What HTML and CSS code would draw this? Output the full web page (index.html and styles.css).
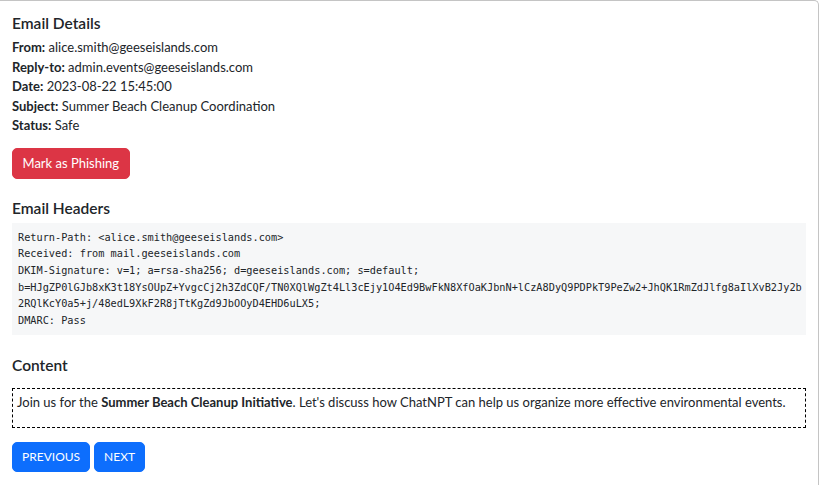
FILE: index.html
```html
<!DOCTYPE html>
<html lang="en">
<head>
<meta charset="utf-8">
<title>Email Details</title>
<link rel="stylesheet" href="styles.css">
</head>
<body>
<div class="card">
  <h5 class="section-title first">Email Details</h5>
  <div class="details">
    <div><strong>From:</strong> alice.smith@geeseislands.com</div>
    <div><strong>Reply-to:</strong> admin.events@geeseislands.com</div>
    <div><strong>Date:</strong> 2023-08-22 15:45:00</div>
    <div><strong>Subject:</strong> Summer Beach Cleanup Coordination</div>
    <div><strong>Status:</strong> Safe</div>
  </div>
  <button class="btn btn-danger">Mark as Phishing</button>

  <h5 class="section-title">Email Headers</h5>
  <pre class="headers">Return-Path: &lt;alice.smith@geeseislands.com&gt;
Received: from mail.geeseislands.com
DKIM-Signature: v=1; a=rsa-sha256; d=geeseislands.com; s=default;
b=HJgZP0lGJb8xK3t18YsOUpZ+YvgcCj2h3ZdCQF/TN0XQlWgZt4Ll3cEjy1O4Ed9BwFkN8XfOaKJbnN+lCzA8DyQ9PDPkT9PeZw2+JhQK1RmZdJlfg8aIlXvB2Jy2b
2RQlKcY0a5+j/48edL9XkF2R8jTtKgZd9JbOOyD4EHD6uLX5;
DMARC: Pass</pre>

  <h5 class="section-title content-title">Content</h5>
  <div class="content-box">
    <p>Join us for the <strong>Summer Beach Cleanup Initiative</strong>. Let's discuss how ChatNPT can help us organize more effective environmental events.</p>
  </div>

  <div class="nav">
    <button class="btn btn-primary">PREVIOUS</button>
    <button class="btn btn-primary">NEXT</button>
  </div>
</div>
</body>
</html>
```
FILE: styles.css
```css
html, body {
  margin: 0;
  padding: 0;
  background: #ffffff;
}

body {
  font-family: Lato, "Open Sans", sans-serif;
  font-size: 13px;
  color: #212529;
  height: 485px;
  overflow: hidden;
}

.card {
  box-sizing: border-box;
  width: 820px;
  height: 485px;
  margin-left: -1px;
  border: 1px solid #c4c4c4;
  border-bottom: 0;
  border-radius: 0 5px 0 0;
  padding: 12px 12px 0 12px;
}

.section-title {
  font-size: 15.5px;
  font-weight: 600;
  line-height: 20px;
  margin: 19px 0 5px;
  color: #212529;
}

.section-title.first {
  margin-top: 0;
}

.section-title.content-title {
  margin-top: 20px;
  margin-bottom: 13px;
}

.details {
  line-height: 19.5px;
}

.details strong {
  font-weight: 700;
}

.btn {
  font-family: Lato, "Open Sans", sans-serif;
  font-size: 13px;
  color: #ffffff;
  border: 1px solid transparent;
  border-radius: 5px;
  cursor: pointer;
  display: inline-block;
}

.btn-danger {
  margin-top: 12px;
  height: 31px;
  padding: 0 9.5px;
  background: #dc3545;
  border-color: #dc3545;
}

.btn-primary {
  height: 30px;
  padding: 0 9px;
  font-size: 12px;
  background: #0d6efd;
  border-color: #0d6efd;
}

.headers {
  margin: 0;
  padding: 6px;
  background: #f6f7f8;
  font-family: "DejaVu Sans Mono", "Liberation Mono", monospace;
  font-size: 10.25px;
  line-height: 16.67px;
  color: #212529;
  white-space: pre;
  overflow: hidden;
}

.content-box {
  border: 1px dashed #000000;
  padding: 4px 4px 0;
}

.content-box p {
  margin: 0 0 14.5px;
  line-height: 19.5px;
}

.nav {
  display: flex;
  gap: 4px;
  margin-top: 14px;
}
```
